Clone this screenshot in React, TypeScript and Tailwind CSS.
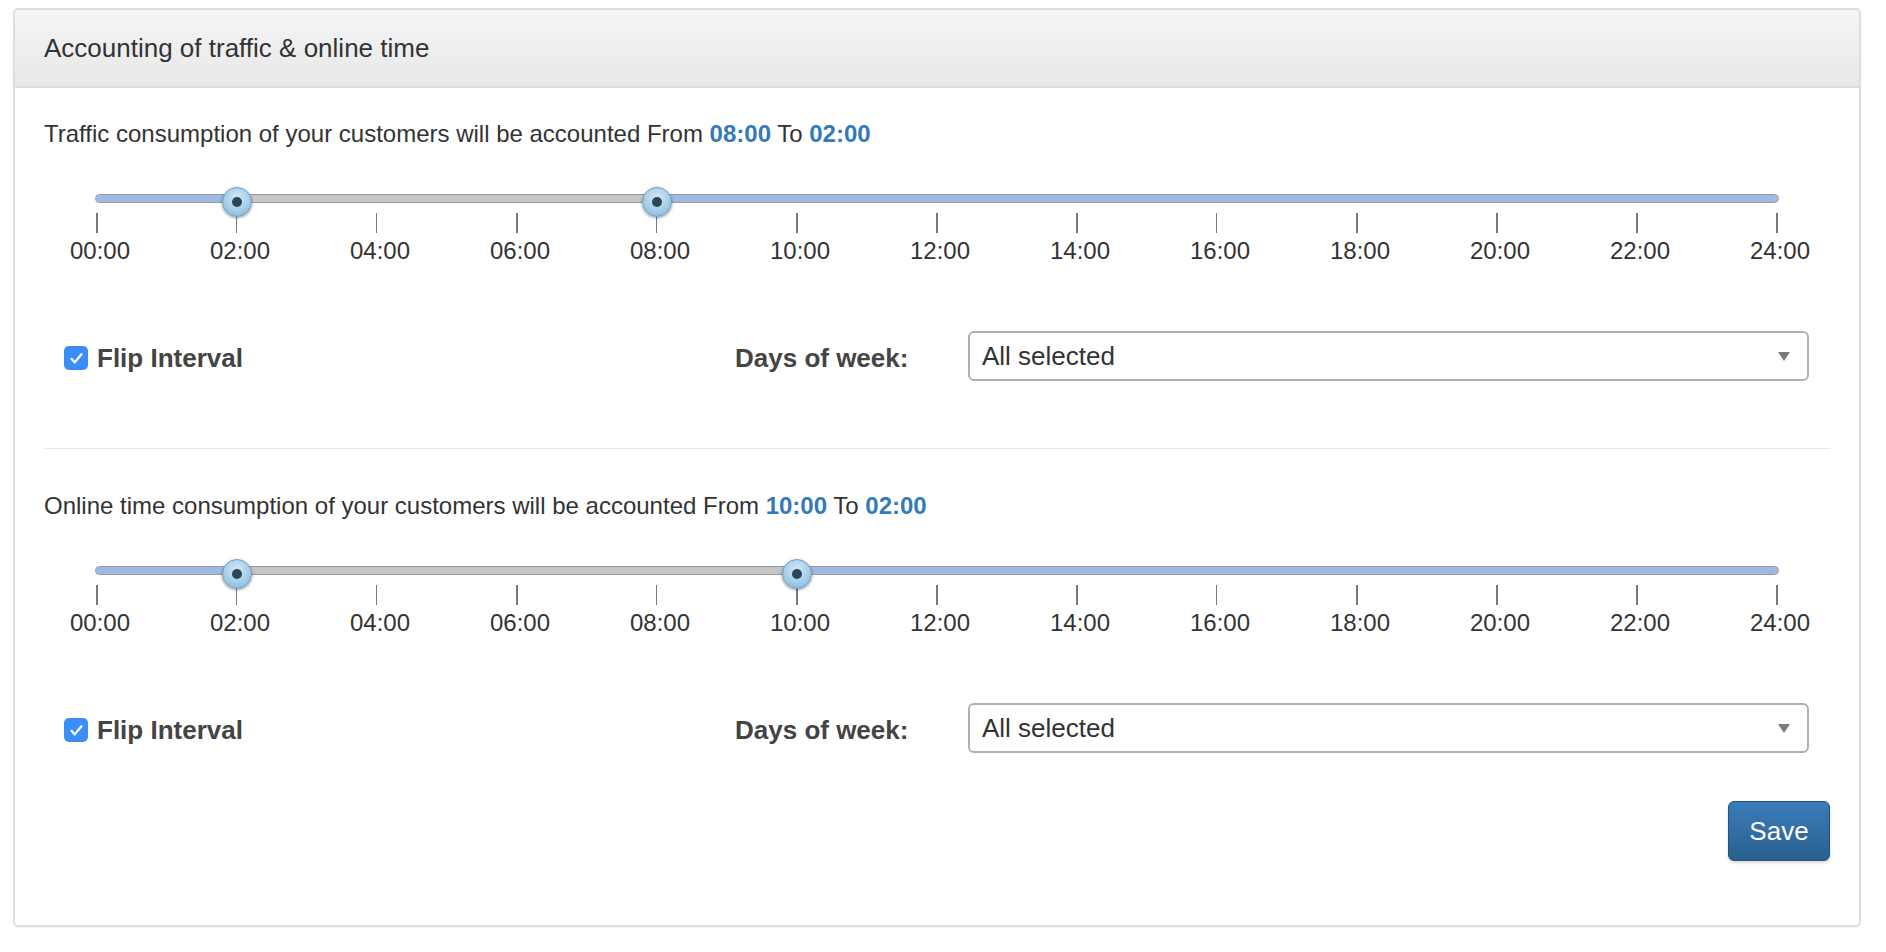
import React, { useState } from 'react';

const HOURS = Array.from({ length: 13 }, (_, i) => i * 2);
const fmt = (h: number) => `${String(h).padStart(2, '0')}:00`;

const Handle: React.FC<{ pct: number }> = ({ pct }) => (
  <div
    className="absolute top-[37px] -ml-[15px] w-[30px] h-[30px] rounded-full border border-[#6f9cbd] bg-[radial-gradient(circle_at_50%_35%,#d2e9f8_0%,#a6cde8_55%,#7aaed2_100%)] shadow-[0_1px_3px_rgba(0,0,0,0.4)] flex items-center justify-center"
    style={{ left: `${pct}%` }}
  >
    <div className="w-[10px] h-[10px] rounded-full bg-[#2b4659]" />
  </div>
);

// flipped range slider: blue outside [from, to], grey inside
const TimeSlider: React.FC<{ lo: number; hi: number }> = ({ lo, hi }) => {
  const p = (h: number) => (h / 24) * 100;
  return (
    <div className="mx-[53px] relative h-[116px]">
      <div className="absolute left-[-2px] right-[-2px] top-[44px] h-[9px] rounded-full border border-[#999] bg-[#c6c6c6] overflow-hidden">
        <div className="absolute top-0 bottom-0 left-0 bg-[#9db9e4]" style={{ width: `${p(lo)}%` }} />
        <div className="absolute top-0 bottom-0 right-0 bg-[#9db9e4]" style={{ left: `${p(hi)}%` }} />
      </div>
      {HOURS.map((h) => (
        <div key={h} className="absolute top-[63px] -ml-[1px] w-[1.5px] h-[20px] bg-[#7a7a7a]" style={{ left: `${p(h)}%` }} />
      ))}
      {HOURS.map((h) => (
        <div
          key={'l' + h}
          className="absolute top-[89px] w-[80px] -ml-[37px] text-center text-[24px] leading-[24px] text-[#333]"
          style={{ left: `${p(h)}%` }}
        >
          {fmt(h)}
        </div>
      ))}
      <Handle pct={p(lo)} />
      <Handle pct={p(hi)} />
    </div>
  );
};

const CheckIcon = () => (
  <svg viewBox="0 0 24 24" className="w-[17px] h-[17px]" fill="none" stroke="white" strokeWidth="3.2" strokeLinecap="round" strokeLinejoin="round">
    <path d="M5 12.5l4.5 5L19 6" />
  </svg>
);

const OptionsRow: React.FC<{ flip: boolean; onFlip: () => void }> = ({ flip, onFlip }) => (
  <div className="flex items-center h-[50px]">
    <div className="w-[691px] pl-[20px] mt-[4px] flex items-center gap-[9px]">
      <button
        onClick={onFlip}
        className={`w-[24px] h-[24px] rounded-[5px] flex items-center justify-center ${flip ? 'bg-[#3a8ef6]' : 'bg-white border border-[#999]'}`}
      >
        {flip && <CheckIcon />}
      </button>
      <span className="font-bold text-[26px] text-[#444]">Flip Interval</span>
    </div>
    <div className="w-[233px] mt-[4px] font-bold text-[26px] text-[#444]">Days of week:</div>
    <div className="w-[841px] h-[50px] rounded-[6px] border-2 border-[#b0b0b0] flex items-center justify-between pl-[12px] pr-[17px] bg-white">
      <span className="text-[26px] text-[#333]">All selected</span>
      <span className="w-0 h-0 border-l-[6px] border-r-[6px] border-t-[9px] border-l-transparent border-r-transparent border-t-[#7a7a7a]" />
    </div>
  </div>
);

const Sentence: React.FC<{ what: string; from: number; to: number }> = ({ what, from, to }) => (
  <p className="h-[32px] leading-[32px] text-[24px] text-[#333]">
    {what} consumption of your customers will be accounted From{' '}
    <b className="text-[#337ab7]">{fmt(from)}</b> To <b className="text-[#337ab7]">{fmt(to)}</b>
  </p>
);

export default function App() {
  const [flipA, setFlipA] = useState(true);
  const [flipB, setFlipB] = useState(true);

  return (
    <div className="w-[1886px] h-[952px] bg-white pt-[8px] pl-[13px] font-['Liberation_Sans',Arial,sans-serif]">
      <div className="w-[1848px] border-2 border-[#dedede] rounded-[5px] overflow-hidden shadow-[0_1px_2px_rgba(0,0,0,0.05)]">
        <div className="h-[78px] bg-[linear-gradient(#f5f5f5,#e8e8e8)] border-b-2 border-[#dcdcdc] flex items-center pl-[29px]">
          <h1 className="text-[26px] text-[#333]">Accounting of traffic &amp; online time</h1>
        </div>

        <div className="px-[29px] pt-[30px] pb-[64px]">
          <Sentence what="Traffic" from={8} to={2} />
          <TimeSlider lo={2} hi={8} />
          <div className="mt-[65px]">
            <OptionsRow flip={flipA} onFlip={() => setFlipA(!flipA)} />
          </div>

          <div className="mt-[67px] h-[1px] bg-[#e8e8e8]" />

          <div className="mt-[41px]">
            <Sentence what="Online time" from={10} to={2} />
          </div>
          <TimeSlider lo={2} hi={10} />
          <div className="mt-[65px]">
            <OptionsRow flip={flipB} onFlip={() => setFlipB(!flipB)} />
          </div>

          <div className="mt-[48px] flex justify-end">
            <button className="w-[102px] h-[60px] rounded-[6px] border border-[#24527d] bg-[linear-gradient(#3a7db9,#2a5f8f)] text-white text-[26px] shadow-[0_2px_3px_rgba(0,0,0,0.15)]">
              Save
            </button>
          </div>
        </div>
      </div>
    </div>
  );
}
